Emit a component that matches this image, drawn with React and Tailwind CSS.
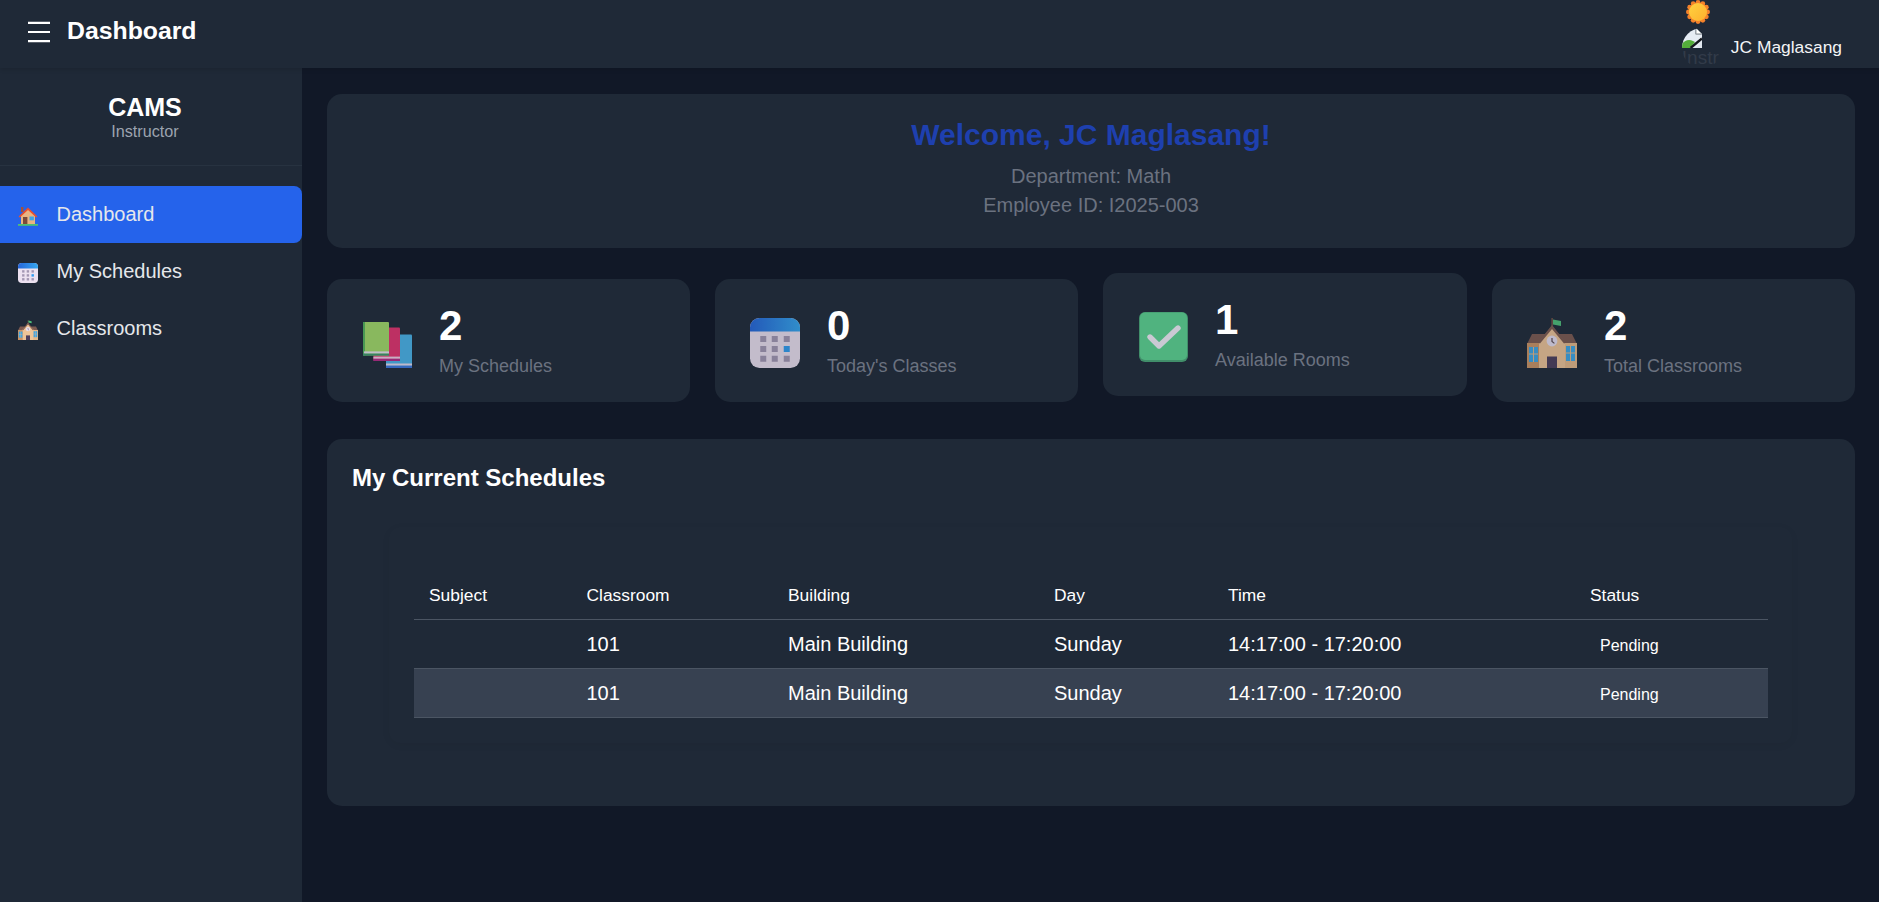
import React from 'react';

// Drawn emoji
function Sun() {
  const bumps = Array.from({ length: 12 }, (_, i) => {
    const a = (i * Math.PI) / 6;
    return { x: 12 + 9.6 * Math.cos(a), y: 12 + 9.6 * Math.sin(a) };
  });
  return (
    <svg width="24" height="24" viewBox="0 0 24 24" className="block">
      <defs>
        <linearGradient id="sunFill" x1="0" y1="0" x2="1" y2="1">
          <stop offset="0" stopColor="#ffd23f" />
          <stop offset="1" stopColor="#fdb02e" />
        </linearGradient>
      </defs>
      {bumps.map((b, i) => (
        <circle key={i} cx={b.x} cy={b.y} r="2.4" fill="#f5822a" />
      ))}
      <circle cx="12" cy="12" r="9.8" fill="#f5822a" />
      <circle cx="12" cy="12" r="9" fill="url(#sunFill)" />
    </svg>
  );
}

function BrokenImage() {
  return (
    <svg width="20" height="20" viewBox="0 0 20 20" className="block">
      <path d="M0 0h14l6 6v14H0z" fill="#e6ecf4" />
      <path d="M14 0l6 6h-6z" fill="#ffffff" stroke="#8d949c" strokeWidth="0.8" />
      <path d="M13.6 0.4v5.8h6" fill="none" stroke="#8d949c" strokeWidth="0.8" />
      <path d="M0 20v-4c3-4 7-5 11-3l2 1-5 6z" fill="#54ad3a" />
      <path d="M13.5 20l6.5-5.5V20z" fill="#dfe6ee" />
      <path d="M8.6 20L20 10.4" stroke="#15181e" strokeWidth="2.4" />
    </svg>
  );
}

function House({ size = 20 }) {
  return (
    <svg width={size} height={size} viewBox="0 0 20 20" className="block">
      <rect x="3" y="1" width="2.4" height="5" fill="#a5523a" />
      <path d="M3 9.5L10 3l7 6.5V18H3z" fill="#e8b483" />
      <path d="M0.6 10.6L10 1.4l9.4 9.2-1.2 1L10 4 1.8 11.6z" fill="#e8502f" />
      <rect x="5" y="11" width="4.4" height="7" fill="#7a4a3a" />
      <rect x="11.5" y="10.5" width="4.4" height="3.8" fill="#3aa4e8" />
      <rect x="0" y="18" width="20" height="1.8" fill="#4fbf73" />
    </svg>
  );
}

function Calendar({ size = 20 }) {
  const xs = [4.1, 8.7, 13.5];
  const ys = [7.2, 11.2, 15.1];
  return (
    <svg width={size} height={size} viewBox="0 0 20 20" className="block">
      <defs>
        <linearGradient id={`calTop${size}`} x1="0" y1="0" x2="1" y2="0">
          <stop offset="0" stopColor="#2566da" />
          <stop offset="1" stopColor="#35a7f0" />
        </linearGradient>
      </defs>
      <rect x="0" y="0" width="20" height="20" rx="3.8" fill="#ece1f0" />
      <path d="M0 5.4V3.8A3.8 3.8 0 0 1 3.8 0h12.4A3.8 3.8 0 0 1 20 3.8v1.6z" fill={`url(#calTop${size})`} />
      {ys.map((y, r) =>
        xs.map((x, c) => (
          <rect
            key={`${r}-${c}`}
            x={x}
            y={y}
            width="2.4"
            height="2.4"
            fill={r === 1 && c === 2 ? '#2f9cf0' : '#a397b3'}
          />
        ))
      )}
    </svg>
  );
}

function School({ size = 50 }) {
  return (
    <svg width={size} height={size} viewBox="0 0 50 50" className="block">
      <rect x="24.4" y="0" width="1.4" height="9" fill="#7a5548" />
      <path d="M26 1.5l8 1.4v5l-8-1.4z" fill="#4fc07a" />
      <path d="M5 16h40l5 10H0z" fill="#7d5a50" />
      <rect x="0" y="25" width="50" height="25" fill="#e6b98a" />
      <rect x="0" y="25" width="12" height="25" fill="#cc9566" />
      <path d="M12 24L25 8l13 16v26H12z" fill="#efc598" />
      <path d="M11 24.4L25 7l14 17.4-2 1.2L25 11 13 25.6z" fill="#7d5a50" />
      <circle cx="25" cy="23" r="5.4" fill="#e6dff0" />
      <path d="M25 20v3.4l2.4 2" stroke="#5c4a52" strokeWidth="1.2" fill="none" />
      <rect x="2" y="29" width="9" height="15" fill="#3ea6e6" />
      <rect x="39" y="28" width="9" height="15" fill="#3ea6e6" />
      <path d="M6.5 29v15M2 36h9M43.5 28v15M39 35h9" stroke="#e6b98a" strokeWidth="1" />
      <rect x="20" y="38.5" width="10" height="11.5" fill="#4d3f5c" />
    </svg>
  );
}

function Books() {
  return (
    <svg width="49" height="46" viewBox="0 0 49 46" className="block">
      <rect x="23" y="12.6" width="26" height="33.4" rx="1" fill="#4ab4ea" />
      <rect x="23" y="41.5" width="26" height="2.2" fill="#e8dcf0" />
      <rect x="23" y="43.7" width="26" height="2.3" fill="#3b78e0" />
      <rect x="10.4" y="5.4" width="26.6" height="33.6" rx="1" fill="#e5326f" />
      <rect x="10.4" y="34.6" width="26.6" height="2.2" fill="#f3d0e6" />
      <rect x="10.4" y="36.8" width="26.6" height="2.2" fill="#b52a88" />
      <rect x="0" y="0" width="26" height="33.6" rx="1" fill="#a4dc68" />
      <rect x="0" y="0" width="2" height="33.6" fill="#54b45a" />
      <rect x="1" y="29.4" width="25" height="2.2" fill="#e8e4f0" />
      <rect x="0" y="31.6" width="26" height="2" fill="#3d9a70" />
    </svg>
  );
}

function Check() {
  return (
    <svg width="49" height="50" viewBox="0 0 49 50" className="block">
      <rect x="0" y="0" width="49" height="50" rx="6" fill="#4aa877" />
      <rect x="1" y="0.5" width="47" height="47.5" rx="5" fill="#5dd692" />
      <path d="M11 25l9 9 19-18" stroke="#f5f1fa" strokeWidth="5.4" strokeLinecap="round" strokeLinejoin="round" fill="none" />
    </svg>
  );
}

function Hamburger() {
  return (
    <svg width="22" height="22" viewBox="0 0 22 22" className="block">
      <path d="M0 1.8h22M0 11h22M0 20.2h22" stroke="#ffffff" strokeWidth="2.2" />
    </svg>
  );
}

function TopBar() {
  return (
    <header className="relative z-10 flex h-[68px] items-center justify-between bg-[#1f2937] pl-[28px] pr-[37px] shadow-[0_2px_4px_rgba(0,0,0,0.1)]">
      <div className="flex items-center gap-[17px]">
        <div className="-mt-[4px]">
          <Hamburger />
        </div>
        <h1 className="-mt-[7px] text-[24.8px] font-bold leading-[28px] text-white">Dashboard</h1>
      </div>
      <div className="flex h-full items-end gap-[9px]">
        <div className="flex h-full w-[40px] flex-col">
          <div className="ml-[4px] h-[28px] w-[24px]">
            <Sun />
          </div>
          <div className="h-[40px] w-[40px] overflow-hidden rounded-full text-[19px] leading-[20px] text-[#323b49]">
            <BrokenImage />
            <span>Instr</span>
          </div>
        </div>
        <span className="pb-[11px] text-[17.4px] leading-[20px] text-[#f3f4f6]">JC Maglasang</span>
      </div>
    </header>
  );
}

function Sidebar() {
  const links = [
    { label: 'Dashboard', icon: <House />, active: true },
    { label: 'My Schedules', icon: <Calendar /> },
    { label: 'Classrooms', icon: <School size={20} /> },
  ];
  return (
    <aside className="w-[302px] shrink-0 bg-[#1f2937]">
      <div className="flex h-[98px] flex-col items-center border-b border-[#273240] pr-[12px] pt-[25px] text-center">
        <div className="text-[25px] font-bold leading-[28px] text-white">CAMS</div>
        <div className="text-[16.2px] leading-[20px] text-[#9ca3af]">Instructor</div>
      </div>
      <nav className="pt-[20px]">
        {links.map((l) => (
          <a
            key={l.label}
            className={`flex h-[57px] items-center gap-[18.5px] rounded-r-[8px] pl-[18px] text-[20px] text-[#e5e7eb] ${l.active ? 'bg-[#2563eb]' : ''}`}
          >
            <span className="mt-[2px]">{l.icon}</span>
            <span className="-mt-[2px]">{l.label}</span>
          </a>
        ))}
      </nav>
    </aside>
  );
}

function StatCard({ icon, value, label, raised }) {
  return (
    <div className={`flex h-[123px] items-center rounded-[15px] bg-[#1f2937] pl-[32px] ${raised ? '-mt-[6px] mb-[6px]' : ''}`}>
      <div className="mr-[24px] mt-[5px] flex h-[50px] w-[56px] items-end justify-center opacity-80">{icon}</div>
      <div className="mb-[2px]">
        <div className="text-[42px] font-bold leading-[46px] text-white">{value}</div>
        <div className="mt-[6px] text-[18px] leading-[22px] text-[#6b7280]">{label}</div>
      </div>
    </div>
  );
}

const rows = [
  { subject: '', room: '101', building: 'Main Building', day: 'Sunday', time: '14:17:00 - 17:20:00', status: 'Pending' },
  { subject: '', room: '101', building: 'Main Building', day: 'Sunday', time: '14:17:00 - 17:20:00', status: 'Pending' },
];

function ScheduleTable() {
  const heads = ['Subject', 'Classroom', 'Building', 'Day', 'Time', 'Status'];
  const widths = ['w-[157.5px]', 'w-[201.5px]', 'w-[266px]', 'w-[174px]', 'w-[362px]', 'w-[193px]'];
  return (
    <table className="mt-[18px] w-full table-fixed border-collapse">
      <colgroup>
        {widths.map((w) => (
          <col key={w} className={w} />
        ))}
      </colgroup>
      <thead>
        <tr className="h-[49px] border-b border-[#4b5563]">
          {heads.map((h) => (
            <th key={h} className="px-[15px] pt-[2px] text-left text-[17.4px] font-normal text-white">
              {h}
            </th>
          ))}
        </tr>
      </thead>
      <tbody>
        {rows.map((r, i) => (
          <tr key={i} className={`h-[49px] border-b border-[#4b5563] text-[20px] text-white ${i % 2 === 1 ? 'bg-[#374151]' : ''}`}>
            <td className="px-[15px]">{r.subject}</td>
            <td className="px-[15px]">{r.room}</td>
            <td className="px-[15px]">{r.building}</td>
            <td className="px-[15px]">{r.day}</td>
            <td className="px-[15px]">{r.time}</td>
            <td className="px-[15px]">
              <span className="block px-[10px] pt-[4px] text-[16px] leading-[20px]">{r.status}</span>
            </td>
          </tr>
        ))}
      </tbody>
    </table>
  );
}

export default function App() {
  return (
    <div className="flex h-screen flex-col overflow-hidden bg-[#111827] font-['Liberation_Sans',Arial,sans-serif]">
      <TopBar />
      <div className="flex flex-1">
        <Sidebar />
        <main className="flex-1 pl-[25px] pr-[24px] pt-[26px]">
          {/* Welcome */}
          <section className="mb-[31px] rounded-[15px] bg-[#1f2937] pb-[28px] pt-[24px] text-center">
            <h2 className="mb-[10px] text-[30px] font-bold leading-[34px] text-[#1e40af]">Welcome, JC Maglasang!</h2>
            <p className="text-[20px] leading-[29px] text-[#6b7280]">Department: Math</p>
            <p className="text-[20px] leading-[29px] text-[#6b7280]">Employee ID: I2025-003</p>
          </section>

          {/* Stats */}
          <section className="mb-[37px] grid grid-cols-[363px_363px_364px_363px] gap-[25px]">
            <StatCard icon={<Books />} value="2" label="My Schedules" />
            <StatCard icon={<Calendar size={50} />} value="0" label="Today's Classes" />
            <StatCard icon={<Check />} value="1" label="Available Rooms" raised />
            <StatCard icon={<School />} value="2" label="Total Classrooms" />
          </section>

          {/* Schedules */}
          <section className="rounded-[15px] bg-[#1f2937] px-[25px] pb-[63px] pt-[25px]">
            <h3 className="mb-[35px] text-[24px] font-bold leading-[28px] text-white">My Current Schedules</h3>
            <div className="ml-[37px] mr-[38px] rounded-[12px] p-[25px] pr-[24px] shadow-[0_2px_8px_rgba(0,0,0,0.05)]">
              <ScheduleTable />
            </div>
          </section>
        </main>
      </div>
    </div>
  );
}
